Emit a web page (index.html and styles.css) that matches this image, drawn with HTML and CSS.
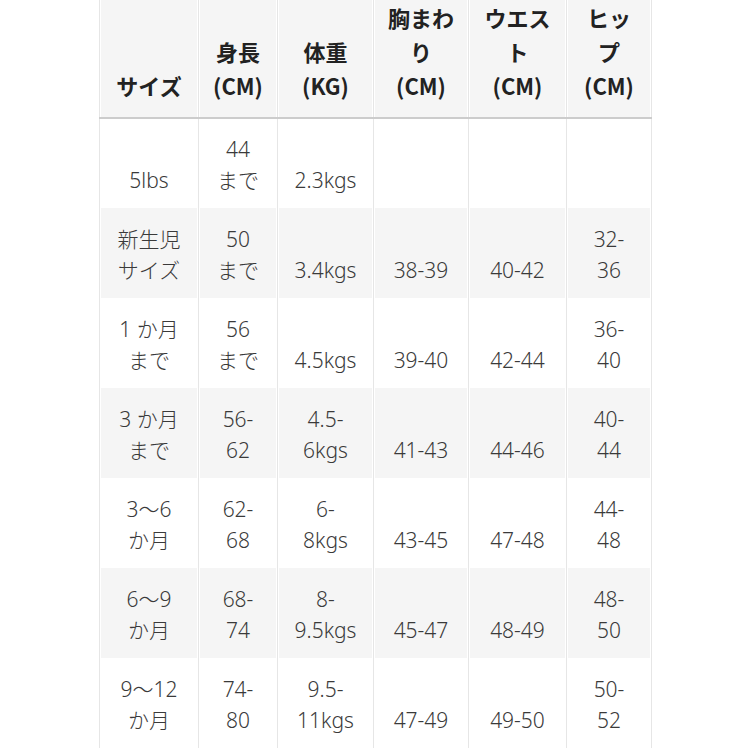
FILE: index.html
```html
<!DOCTYPE html>
<html lang="ja">
<head>
<meta charset="utf-8">
<link rel="stylesheet" href="styles.css">
</head>
<body>
<div class="page">
<table class="size-table">
  <colgroup>
    <col class="c1"><col class="c2"><col class="c3"><col class="c4"><col class="c5"><col class="c6">
  </colgroup>
  <thead>
    <tr>
      <th>サイズ</th>
      <th>身長<br>(CM)</th>
      <th>体重<br>(KG)</th>
      <th>胸まわ<br>り<br>(CM)</th>
      <th>ウエス<br>ト<br>(CM)</th>
      <th>ヒッ<br>プ<br>(CM)</th>
    </tr>
  </thead>
  <tbody>
    <tr>
      <td>5lbs</td><td>44<br>まで</td><td>2.3kgs</td><td></td><td></td><td></td>
    </tr>
    <tr>
      <td>新生児<br>サイズ</td><td>50<br>まで</td><td>3.4kgs</td><td>38-39</td><td>40-42</td><td>32-<br>36</td>
    </tr>
    <tr>
      <td>1 か月<br>まで</td><td>56<br>まで</td><td>4.5kgs</td><td>39-40</td><td>42-44</td><td>36-<br>40</td>
    </tr>
    <tr>
      <td>3 か月<br>まで</td><td>56-<br>62</td><td>4.5-<br>6kgs</td><td>41-43</td><td>44-46</td><td>40-<br>44</td>
    </tr>
    <tr>
      <td>3〜6<br>か月</td><td>62-<br>68</td><td>6-<br>8kgs</td><td>43-45</td><td>47-48</td><td>44-<br>48</td>
    </tr>
    <tr>
      <td>6〜9<br>か月</td><td>68-<br>74</td><td>8-<br>9.5kgs</td><td>45-47</td><td>48-49</td><td>48-<br>50</td>
    </tr>
    <tr>
      <td>9〜12<br>か月</td><td>74-<br>80</td><td>9.5-<br>11kgs</td><td>47-49</td><td>49-50</td><td>50-<br>52</td>
    </tr>
  </tbody>
</table>
</div>
</body>
</html>
```
FILE: styles.css
```css
html, body {
  margin: 0;
  padding: 0;
  background: #ffffff;
}
.page {
  padding-left: 99px;
  margin-top: -14px;
  font-family: "Noto Sans CJK JP", "Noto Sans", sans-serif;
}
.size-table {
  border-collapse: collapse;
  table-layout: fixed;
  width: 552px;
  border-left: 1px solid #e6e6e6;
  border-right: 1px solid #e6e6e6;
}
.c1 { width: 99px; }
.c2 { width: 79px; }
.c3 { width: 96px; }
.c4 { width: 95px; }
.c5 { width: 98px; }
.c6 { width: 85px; }
.size-table th,
.size-table td {
  text-align: center;
  vertical-align: bottom;
  border-left: 1px solid #e6e6e6;
  border-right: 1px solid #e6e6e6;
  padding: 0 4px;
}
.size-table th {
  background: #f5f5f5;
  color: #222;
  font-weight: 700;
  font-size: 22px;
  line-height: 34px;
  padding-top: 14px;
  padding-bottom: 15px;
  border-bottom: 2px solid #cccccc;
  box-shadow: inset 1px 0 #fff, inset -1px 0 #fff;
}
.size-table td {
  font-family: "Noto Sans", "Noto Sans CJK JP", sans-serif;
  color: #3a3a3a;
  font-weight: 300;
  font-size: 21px;
  line-height: 31px;
  height: 90px;
  padding-top: 15px;
  padding-bottom: 12px;
  box-sizing: border-box;
}
.size-table tbody tr:nth-child(even) td {
  background: #f5f5f5;
  box-shadow: inset 1px 0 #fff, inset -1px 0 #fff;
}
```
